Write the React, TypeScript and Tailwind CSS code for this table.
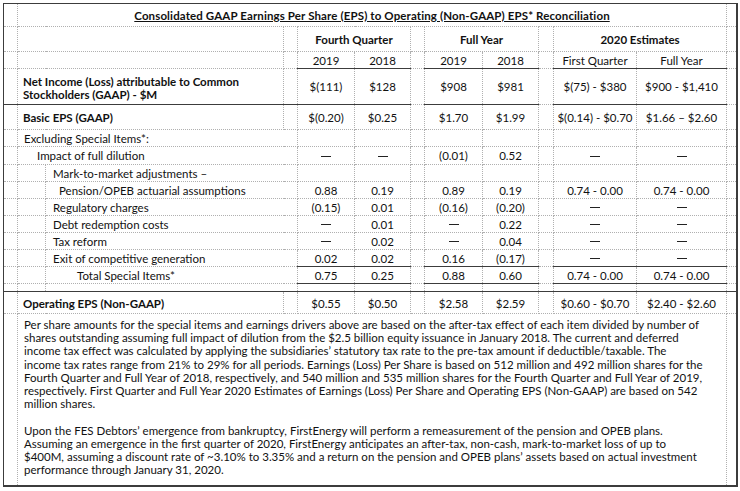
import React from "react";

const dot = "border border-dotted border-[#b0b0b0]";
const solidB = "[border-bottom-style:solid] border-b-[#3c3c3c]";

type Row = { label: string; indent: "ex" | "imp" | "sub" | "pen" | "tot"; vals: string[]; bottom?: boolean };

const rows: Row[] = [
  { label: "Excluding Special Items*:", indent: "ex", vals: ["", "", "", "", "", ""] },
  { label: "Impact of full dilution", indent: "imp", vals: ["—", "—", "(0.01)", "0.52", "—", "—"] },
  { label: "Mark-to-market adjustments –", indent: "sub", vals: ["", "", "", "", "", ""] },
  { label: "Pension/OPEB actuarial assumptions", indent: "pen", vals: ["0.88", "0.19", "0.89", "0.19", "0.74 - 0.00", "0.74 - 0.00"] },
  { label: "Regulatory charges", indent: "sub", vals: ["(0.15)", "0.01", "(0.16)", "(0.20)", "—", "—"] },
  { label: "Debt redemption costs", indent: "sub", vals: ["—", "0.01", "—", "0.22", "—", "—"] },
  { label: "Tax reform", indent: "sub", vals: ["—", "0.02", "—", "0.04", "—", "—"] },
  { label: "Exit of competitive generation", indent: "sub", vals: ["0.02", "0.02", "0.16", "(0.17)", "—", "—"], bottom: true },
  { label: "Total Special Items*", indent: "tot", vals: ["0.75", "0.25", "0.88", "0.60", "0.74 - 0.00", "0.74 - 0.00"], bottom: true },
];

function Val({ v }: { v: string }) {
  if (v === "—") return <span className="inline-block w-[10px] border-t-[1.5px] border-[#222] align-middle relative top-[-1px]"></span>;
  return <>{v}</>;
}

function DataCells({ vals, bottom, extra = "" }: { vals: string[]; bottom?: boolean; extra?: string }) {
  const c = (v: string) => (
    <td className={`${dot} ${bottom ? solidB : ""} ${extra} text-center whitespace-nowrap p-0`}>
      <Val v={v} />
    </td>
  );
  return (
    <>
      {c(vals[0])}
      {c(vals[1])}
      <td className={`${dot} ${extra}`}></td>
      {c(vals[2])}
      {c(vals[3])}
      <td className={`${dot} ${extra}`}></td>
      {c(vals[4])}
      {c(vals[5])}
      <td className={`${dot} ${extra}`}></td>
    </>
  );
}

export default function App() {
  const pad: Record<string, string> = {
    ex: "pl-[6px]",
    imp: "pl-[19px]",
    sub: "pl-[7px]",
    pen: "pl-[13px]",
    tot: "pl-[31px]",
  };
  return (
    <div className="w-[740px] h-[491px] bg-white pt-[3px] pl-[3px] text-[#111] font-['Lato','Liberation_Sans',sans-serif] text-[11.5px] leading-[13px]">
      <table className="table-fixed border-collapse w-[733px] border border-[#3c3c3c] border-r-2 border-b-2">
        <colgroup>
          <col className="w-[14px]" />
          <col className="w-[28px]" />
          <col className="w-[238px]" />
          <col className="w-[14px]" />
          <col className="w-[57px]" />
          <col className="w-[56px]" />
          <col className="w-[14px]" />
          <col className="w-[58px]" />
          <col className="w-[56px]" />
          <col className="w-[15px]" />
          <col className="w-[83px]" />
          <col className="w-[90px]" />
          <col className="w-[10px]" />
        </colgroup>
        <tbody>
          <tr className="h-[23px]">
            <td className={dot}></td>
            <td colSpan={11} className={`${dot} text-center font-bold underline whitespace-nowrap p-0 tracking-[0.12px]`}>
              Consolidated GAAP Earnings Per Share (EPS) to Operating (Non-GAAP) EPS* Reconciliation
            </td>
            <td className={dot}></td>
          </tr>
          <tr className="h-[25px]">
            <td className={dot}></td>
            <td colSpan={2} className={dot}></td>
            <td className={dot}></td>
            <td colSpan={2} className={`${dot} text-center font-bold`}>Fourth Quarter</td>
            <td className={dot}></td>
            <td colSpan={2} className={`${dot} text-center font-bold`}>Full Year</td>
            <td className={dot}></td>
            <td colSpan={2} className={`${dot} text-center font-bold`}>2020 Estimates</td>
            <td className={dot}></td>
          </tr>
          <tr className="h-[17px]">
            <td className={dot}></td>
            <td colSpan={2} className={dot}></td>
            <td className={dot}></td>
            <DataCells vals={["2019", "2018", "2019", "2018", "First Quarter", "Full Year"]} bottom />
          </tr>
          <tr className="h-[36px]">
            <td className={`${dot} ${solidB}`}></td>
            <td colSpan={2} className={`${dot} ${solidB} font-bold pl-[5px] pt-[2px]`}>
              Net Income (Loss) attributable to Common
              <br />
              Stockholders (GAAP) - $M
            </td>
            <td className={`${dot} ${solidB}`}></td>
            <DataCells vals={["$(111)", "$128", "$908", "$981", "$(75) - $380", "$900 - $1,410"]} bottom />
          </tr>
          <tr className="h-[25px]">
            <td className={dot}></td>
            <td colSpan={2} className={`${dot} font-bold pl-[5px]`}>Basic EPS (GAAP)</td>
            <td className={dot}></td>
            <DataCells vals={["$(0.20)", "$0.25", "$1.70", "$1.99", "$(0.14) - $0.70", "$1.66 – $2.60"]} />
          </tr>
          {rows.map((r, i) => (
            <tr key={i} className={i === 1 ? "h-[18px]" : "h-[17px]"}>
              <td className={dot}></td>
              {r.indent === "ex" || r.indent === "imp" ? (
                <td colSpan={3} className={`${dot} ${pad[r.indent]} whitespace-nowrap`}>{r.label}</td>
              ) : (
                <>
                  <td className={dot}></td>
                  <td colSpan={2} className={`${dot} ${pad[r.indent]} whitespace-nowrap`}>{r.label}</td>
                </>
              )}
              <DataCells vals={r.vals} bottom={r.bottom} />
            </tr>
          ))}
          <tr className="h-[8px]">
            <td className={`${dot} ${solidB}`}></td>
            <td className={`${dot} ${solidB}`}></td>
            <td colSpan={2} className={`${dot} ${solidB}`}></td>
            <DataCells vals={["", "", "", "", "", ""]} bottom extra={solidB} />
          </tr>
          <tr className="h-[22px]">
            <td className={dot}></td>
            <td colSpan={2} className={`${dot} font-bold pl-[5px] pt-[2px]`}>Operating EPS (Non-GAAP)</td>
            <td className={dot}></td>
            <DataCells vals={["$0.55", "$0.50", "$2.58", "$2.59", "$0.60 - $0.70", "$2.40 - $2.60"]} extra="pt-[2px]" />
          </tr>
          <tr className="h-[172px]">
            <td className={dot}></td>
            <td colSpan={11} className={`${dot} align-top pl-[6px] pt-[4px] whitespace-nowrap leading-[13.2px]`}>
              <p>
                Per share amounts for the special items and earnings drivers above are based on the after-tax effect of each item divided by number of
                <br />
                shares outstanding assuming full impact of dilution from the $2.5 billion equity issuance in January 2018. The current and deferred
                <br />
                income tax effect was calculated by applying the subsidiaries’ statutory tax rate to the pre-tax amount if deductible/taxable. The
                <br />
                income tax rates range from 21% to 29% for all periods. Earnings (Loss) Per Share is based on 512 million and 492 million shares for the
                <br />
                Fourth Quarter and Full Year of 2018, respectively, and 540 million and 535 million shares for the Fourth Quarter and Full Year of 2019,
                <br />
                respectively. First Quarter and Full Year 2020 Estimates of Earnings (Loss) Per Share and Operating EPS (Non-GAAP) are based on 542
                <br />
                million shares.
              </p>
              <p className="mt-[13.2px]">
                Upon the FES Debtors’ emergence from bankruptcy, FirstEnergy will perform a remeasurement of the pension and OPEB plans.
                <br />
                Assuming an emergence in the first quarter of 2020, FirstEnergy anticipates an after-tax, non-cash, mark-to-market loss of up to
                <br />
                $400M, assuming a discount rate of ~3.10% to 3.35% and a return on the pension and OPEB plans’ assets based on actual investment
                <br />
                performance through January 31, 2020.
              </p>
            </td>
            <td className={dot}></td>
          </tr>
        </tbody>
      </table>
    </div>
  );
}
